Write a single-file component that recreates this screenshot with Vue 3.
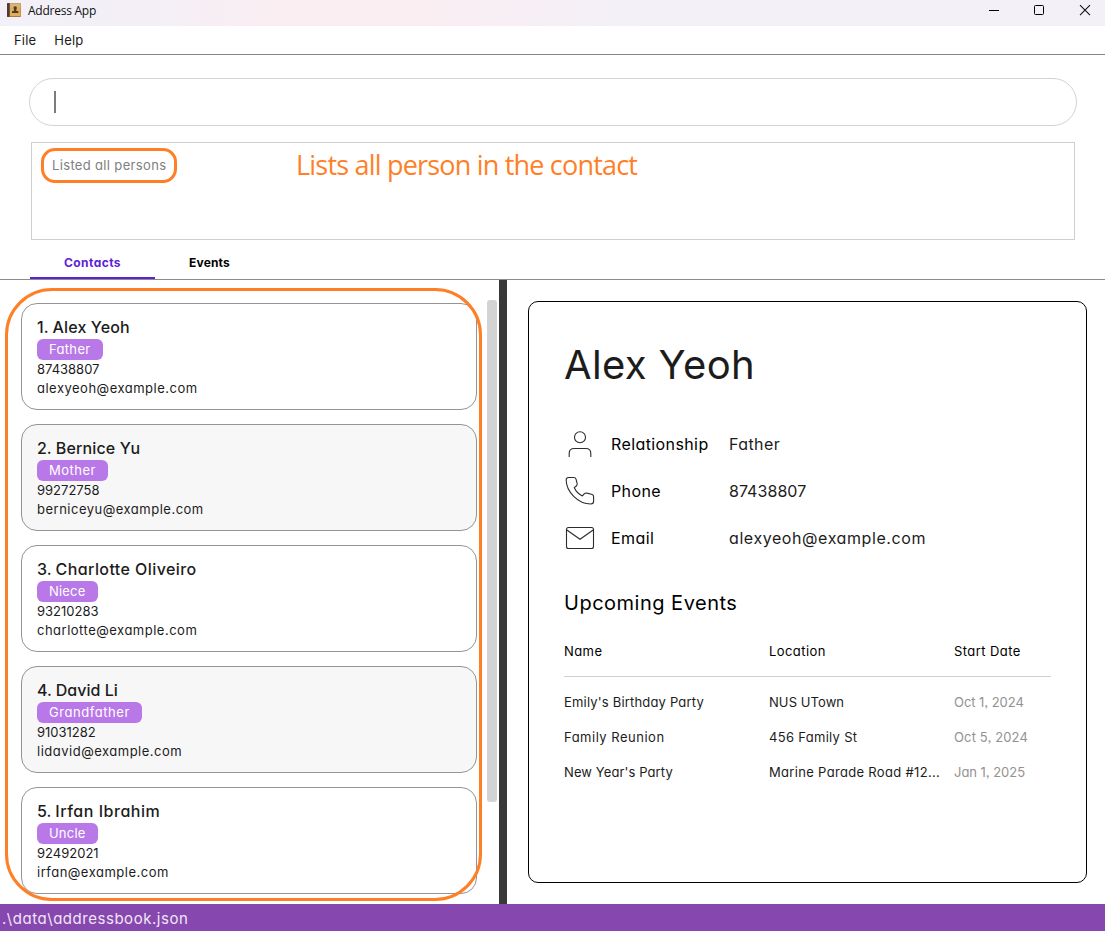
<script setup>
const menus = ['File', 'Help']

// tracking values are letter-spacings in px: [name, badge]
const contacts = [
  { name: 'Alex Yeoh', relation: 'Father', phone: '87438807', email: 'alexyeoh@example.com', tracking: [0.15, 0.33] },
  { name: 'Bernice Yu', relation: 'Mother', phone: '99272758', email: 'berniceyu@example.com', tracking: [0.15, 0.5] },
  { name: 'Charlotte Oliveiro', relation: 'Niece', phone: '93210283', email: 'charlotte@example.com', tracking: [0.42, 0.2] },
  { name: 'David Li', relation: 'Grandfather', phone: '91031282', email: 'lidavid@example.com', tracking: [0, 0.55] },
  { name: 'Irfan Ibrahim', relation: 'Uncle', phone: '92492021', email: 'irfan@example.com', tracking: [0.52, 0.2] },
]

const events = [
  { name: "Emily's Birthday Party", location: 'NUS UTown', date: 'Oct 1, 2024', tracking: [0.18, 0.08, -0.04] },
  { name: 'Family Reunion', location: '456 Family St', date: 'Oct 5, 2024', tracking: [0.5, 0.3, 0.14] },
  { name: "New Year's Party", location: 'Marine Parade Road #12...', date: 'Jan 1, 2025', tracking: [0.1, 0.32, -0.03] },
]

const track = (px) => ({ letterSpacing: px + 'px' })
</script>

<template>
  <div class="window">
    <header class="titlebar">
      <svg class="app-icon" width="14" height="14" viewBox="0 0 14 14">
        <rect width="14" height="14" rx="1" fill="#a97a3c" />
        <rect x="3" y="0.5" width="10.5" height="12.5" fill="#e0ae58" />
        <rect x="3" y="0.5" width="10.5" height="4" fill="#d6b27c" />
        <rect width="2.6" height="14" rx="0.8" fill="#4d3c35" />
        <circle cx="8.2" cy="5" r="1.7" fill="#4a3a2c" />
        <path d="M7.200 6h2v1.800l2.200 .5v1.800H5V8.300l2.200-.5z" fill="#4a3a2c" />
      </svg>
      <span class="app-title">Address App</span>
      <svg class="controls" width="106" height="20" viewBox="0 0 106 20">
        <path d="M4 10.500h10" stroke="#000" fill="none" />
        <rect x="49.500" y="5.500" width="9" height="9" rx="1" stroke="#000" fill="none" />
        <path d="M95 5.200l10 10M105 5.200l-10 10" stroke="#111" stroke-width="1.100" fill="none" />
      </svg>
    </header>

    <nav class="menubar">
      <span v-for="m in menus" :key="m">{{ m }}</span>
    </nav>

    <div class="command"><i class="caret"></i></div>

    <div class="result">
      <span class="message">Listed all persons</span>
      <span class="note">Lists all person in the contact</span>
    </div>

    <div class="tabs">
      <span class="tab active">Contacts</span>
      <span class="tab">Events</span>
    </div>

    <main class="split">
      <section class="list">
        <article v-for="(c, i) in contacts" :key="c.name" class="person">
          <h2>{{ i + 1 }}.<b :style="track(c.tracking[0])">{{ c.name }}</b></h2>
          <span class="badge" :style="track(c.tracking[1])">{{ c.relation }}</span>
          <p>{{ c.phone }}</p>
          <p class="email">{{ c.email }}</p>
        </article>
        <div class="scrollbar"></div>
        <div class="outline"></div>
      </section>

      <div class="divider"></div>

      <section class="detail">
        <h1>Alex Yeoh</h1>
        <div class="facts">
          <svg width="32" height="32" viewBox="0 0 32 32">
            <circle cx="16" cy="9.300" r="5.500" />
            <path d="M5.200 29v-3.500c0-3 2-5 5-5h11.600c3 0 5 2 5 5V29" />
          </svg>
          <span class="label">Relationship</span>
          <span>Father</span>
          <svg width="32" height="32" viewBox="0 0 32 32">
            <path d="M4.500 2.500h5.300c1.200 0 2 .7 2.300 1.800l1 4c.3 1.100 0 2-.8 2.700l-2 1.700c1.500 3.300 4.600 6.600 8.200 8.200l1.700-2c.7-.8 1.600-1.100 2.700-.8l4.700 1.100c1.300 .3 2 1.100 2 2.400v4.700c0 1.700-1 2.700-2.700 2.700C14 29 2.200 16.500 2.200 5c0-1.500 .8-2.500 2.300-2.500z" />
          </svg>
          <span class="label">Phone</span>
          <span class="num">87438807</span>
          <svg width="32" height="32" viewBox="0 0 32 32">
            <rect x="2.500" y="5.500" width="27" height="21" rx="2" />
            <path d="M2.800 8L16 17.300 29.200 8" />
          </svg>
          <span class="label">Email</span>
          <span class="mail">alexyeoh@example.com</span>
        </div>

        <h3>Upcoming Events</h3>
        <div class="row head">
          <span>Name</span><span>Location</span><span>Start Date</span>
        </div>
        <div v-for="e in events" :key="e.name" class="row">
          <span :style="track(e.tracking[0])">{{ e.name }}</span>
          <span :style="track(e.tracking[1])">{{ e.location }}</span>
          <span class="date" :style="track(e.tracking[2])">{{ e.date }}</span>
        </div>
      </section>
    </main>

    <footer class="status">.\data\addressbook.json</footer>
  </div>
</template>

<style>
body {
  background: #fff;
  overflow: hidden;
}
</style>

<style scoped>
.window {
  width: 1105px;
  height: 931px;
  display: flex;
  flex-direction: column;
  box-sizing: border-box;
  background: #fff;
  color: #1c1c1c;
  font-family: Inter, "Open Sans", sans-serif;
  font-feature-settings: "cv11", "ss03";
  font-size: 13px;
  overflow: hidden;
}
.window * {
  box-sizing: border-box;
}
h1, h2, h3, p {
  margin: 0;
  font-weight: 400;
}
.titlebar {
  height: 26px;
  flex: none;
  display: flex;
  align-items: flex-start;
  padding: 3px 14px 0 7px;
  background: linear-gradient(90deg, #f2f0f8 0, #f4eff7 150px, #faeef2 270px, #faeef2 420px, #f3f0f8 640px, #f3f0f8 100%);
}
.app-title {
  margin-left: 7px;
  line-height: 16px;
  font-family: "Open Sans", sans-serif;
  font-size: 12px;
  color: #111;
  letter-spacing: -0.25px;
}
.controls {
  margin-left: auto;
  margin-top: -3px;
}
.menubar {
  height: 29px;
  flex: none;
  display: flex;
  gap: 18px;
  padding-left: 14px;
  line-height: 29px;
  letter-spacing: 0.2px;
  border-bottom: 1px solid #868686;
}
.command {
  flex: none;
  margin: 23px 28px 0 29px;
  height: 48px;
  border: 1px solid #d3d3d3;
  border-radius: 24px;
  padding: 12px 0 0 24px;
}
.caret {
  display: block;
  width: 2px;
  height: 22px;
  background: #7d7d7d;
}
.result {
  flex: none;
  display: flex;
  align-items: flex-start;
  margin: 16px 30px 0 31px;
  height: 98px;
  border: 1px solid #cfcfcf;
  padding: 5px 0 0 9px;
}
.message {
  width: 136px;
  height: 35px;
  border: 3px solid #ff7f27;
  border-radius: 14px;
  line-height: 28px;
  padding-left: 8px;
  color: #808080;
  letter-spacing: 0.34px;
  white-space: nowrap;
}
.note {
  margin-left: 119px;
  line-height: 34px;
  font-family: "Open Sans", sans-serif;
  font-size: 27px;
  letter-spacing: -0.8px;
  color: #ff7f27;
  white-space: nowrap;
}
.tabs {
  flex: none;
  height: 40px;
  display: flex;
  padding: 6px 0 0 30px;
  border-bottom: 1px solid #8c8c8c;
}
.tab {
  width: 125px;
  height: 33px;
  line-height: 33px;
  text-align: center;
  font-size: 12px;
  font-weight: 700;
  letter-spacing: 0.15px;
  color: #000;
}
.tab.active {
  color: #5d22d8;
  letter-spacing: 0.42px;
  border-bottom: 2px solid #5d22d8;
}
.tab:last-child {
  width: 109px;
}
.split {
  flex: 1;
  display: flex;
  min-height: 0;
}
.list {
  position: relative;
  width: 499px;
  padding: 23px 22px 0 21px;
  display: flex;
  flex-direction: column;
  gap: 14px;
}
.person {
  flex: none;
  height: 107px;
  border: 1px solid #949494;
  border-radius: 16px;
  padding: 14px 15px 0;
}
.person:nth-child(even) {
  background: #f7f7f7;
}
.person h2 {
  height: 21px;
  line-height: 18px;
  font-size: 16px;
  font-weight: 500;
}
.person h2 b {
  font-weight: 500;
  margin-left: 4px;
}
.badge {
  display: block;
  width: fit-content;
  height: 21px;
  line-height: 21px;
  padding: 0 12px;
  border-radius: 6px;
  background: #b978e8;
  color: #fff;
}
.person p {
  line-height: 19px;
}
.person .email {
  letter-spacing: 0.5px;
}
.scrollbar {
  position: absolute;
  left: 487px;
  top: 20px;
  width: 10px;
  height: 502px;
  border-radius: 3px;
  background: #d3d3d3;
}
.outline {
  position: absolute;
  left: 5px;
  top: 8px;
  width: 477px;
  height: 613px;
  border: 3px solid #ff7f27;
  border-radius: 47px;
}
.divider {
  width: 8px;
  background: #383838;
}
.detail {
  flex: 1;
  margin: 21px 18px 21px 21px;
  border: 1px solid #000;
  border-radius: 10px;
  padding: 33px 35px 0;
}
.detail h1 {
  font-size: 40px;
  line-height: 60px;
  height: 85px;
  letter-spacing: 0.35px;
}
.facts {
  display: grid;
  grid-template-columns: 47px 118px 1fr;
  grid-auto-rows: 47px;
  align-items: center;
  font-size: 16px;
  letter-spacing: 0.4px;
}
.facts svg {
  fill: none;
  stroke: #2c2c2c;
  stroke-width: 1.1;
}
.facts .num {
  letter-spacing: 0.05px;
}
.facts .mail {
  letter-spacing: 0.58px;
}
.label, .detail h3, .head {
  color: #000;
}
.detail h3 {
  margin-top: 24px;
  font-size: 20px;
  line-height: 36px;
  letter-spacing: 0.5px;
}
.row {
  display: grid;
  grid-template-columns: 205px 185px 1fr;
  line-height: 35px;
  white-space: nowrap;
}
.head {
  line-height: 20px;
  padding: 20px 0 15px;
  margin-bottom: 8px;
  border-bottom: 1px solid #cfcfcf;
  letter-spacing: 0.43px;
}
.date {
  color: #929292;
}
.status {
  flex: none;
  height: 27px;
  padding-left: 2px;
  line-height: 29px;
  background: #8647ae;
  color: #f0e6f5;
  font-size: 15px;
  letter-spacing: 0.53px;
}
</style>
